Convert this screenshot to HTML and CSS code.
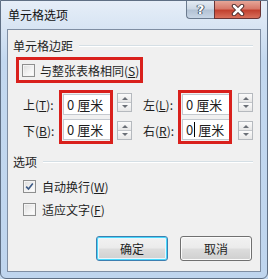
FILE: index.html
```html
<!DOCTYPE html>
<html>
<head>
  <link rel="stylesheet" href="styles.css">
</head>
<body>
  <div class="window">
    <div class="titlebar">
      <span class="title">单元格选项</span>
      <div class="caption-buttons">
        <div class="cap-btn help">?</div>
        <div class="cap-btn close">
          <svg width="14" height="12" viewBox="0 0 14 12">
            <path d="M3 2L11 10M11 2L3 10" stroke="#4a2a2a" stroke-width="4.5" stroke-linecap="round"/>
            <path d="M3 2L11 10M11 2L3 10" stroke="#ffffff" stroke-width="2.5" stroke-linecap="round"/>
          </svg>
        </div>
      </div>
    </div>

    <div class="client">
      <div class="group-title">单元格边距</div>

      <div class="same-box">
        <span class="check"></span>
        <span class="same-text">与整张表格相同(<u>S</u>)</span>
      </div>

      <div class="margins">
        <div class="side left-side">
          <div class="labels">
            <span>上(<u>T</u>):</span>
            <span>下(<u>B</u>):</span>
          </div>
          <div class="red-box">
            <div class="field">0 厘米</div>
            <div class="field">0 厘米</div>
          </div>
          <div class="spins">
            <div class="spin"><span class="up"></span><span class="down"></span></div>
            <div class="spin"><span class="up"></span><span class="down"></span></div>
          </div>
        </div>
        <div class="side right-side">
          <div class="labels">
            <span>左(<u>L</u>):</span>
            <span>右(<u>R</u>):</span>
          </div>
          <div class="red-box">
            <div class="field">0 厘米</div>
            <div class="field">0<span class="caret"></span>厘米</div>
          </div>
          <div class="spins">
            <div class="spin"><span class="up"></span><span class="down"></span></div>
            <div class="spin"><span class="up"></span><span class="down"></span></div>
          </div>
        </div>
      </div>

      <div class="group-title options-title">选项</div>

      <div class="opt first">
        <span class="check checked">
          <svg width="9" height="9" viewBox="0 0 9 9">
            <path d="M1.2 4.6L3.5 7L7.8 1.4" stroke="#3c5a86" stroke-width="1.6" fill="none"/>
          </svg>
        </span>
        <span>自动换行(<u>W</u>)</span>
      </div>
      <div class="opt">
        <span class="check"></span>
        <span>适应文字(<u>F</u>)</span>
      </div>

      <div class="buttons">
        <button class="btn default">确定</button>
        <button class="btn">取消</button>
      </div>
    </div>
  </div>
</body>
</html>
```

FILE: styles.css
```css
body {
  margin: 0;
  font-family: "Noto Sans CJK SC", "Microsoft YaHei", sans-serif;
  font-size: 12px;
  color: #1e1e1e;
  background: #c6daf0;
}

.window {
  width: 268px;
  height: 279px;
  box-sizing: border-box;
  border: 1px solid #5f6f84;
  border-radius: 0 0 6px 6px;
  background: linear-gradient(180deg, #e6eef8 0px, #d7e4f3 28px, #c3d8ef 60px, #bfd5ee 100%);
  display: flex;
  flex-direction: column;
  padding: 0 6px 6px 6px;
}

.titlebar {
  height: 28px;
  display: flex;
  justify-content: space-between;
  align-items: flex-start;
}

.title {
  margin-top: 6px;
  margin-left: 1px;
  line-height: 16px;
  color: #111;
}

.caption-buttons {
  display: flex;
}

.cap-btn {
  height: 18px;
  box-sizing: border-box;
  border: 1px solid #6b7a8e;
  border-top: none;
  display: flex;
  align-items: center;
  justify-content: center;
}

.help {
  width: 28px;
  border-right: none;
  border-radius: 0 0 0 4px;
  background: linear-gradient(180deg, #e4ebf3 0%, #cdd8e5 45%, #b3c2d4 55%, #c8d6e6 100%);
  color: #fff;
  font-family: "DejaVu Sans", sans-serif;
  font-weight: bold;
  font-size: 13px;
  text-shadow: 0 0 1px #38485c, 0 0 1px #38485c, 1px 0 0 #4a5a6e, -1px 0 0 #4a5a6e;
}

.close {
  width: 47px;
  border-color: #6a3434;
  border-radius: 0 0 4px 0;
  background: linear-gradient(180deg, #e6a698 0%, #d7796a 45%, #c2412f 55%, #d8705c 100%);
}

.client {
  flex: 1;
  border: 1px solid #7f8ea3;
  background: #f0f0f0;
  display: flex;
  flex-direction: column;
}

.group-title {
  margin: 9px 7px 0 5px;
  height: 14px;
  line-height: 14px;
  display: flex;
  align-items: center;
  gap: 6px;
}

.group-title::after {
  content: "";
  flex: 1;
  height: 1px;
  background: #d5dfe5;
  border-bottom: 1px solid #ffffff;
}

.same-box {
  margin: 4px 0 0 8px;
  width: 127px;
  height: 26px;
  box-sizing: border-box;
  border: 3px solid #d9201c;
  display: flex;
  align-items: center;
  padding-left: 3px;
  gap: 5px;
}

.same-text {
  white-space: nowrap;
}

.check {
  width: 13px;
  height: 13px;
  flex-shrink: 0;
  box-sizing: border-box;
  border: 1px solid #8e8f8f;
  background: linear-gradient(135deg, #dcdcdc 0%, #f4f4f4 60%, #ffffff 100%);
  box-shadow: inset 0 0 0 1px #f4f4f4;
  display: flex;
  align-items: center;
  justify-content: center;
}

.margins {
  margin-top: 7px;
  display: flex;
}

.side {
  display: flex;
  align-items: stretch;
}

.left-side {
  margin-left: 15px;
}

.right-side {
  margin-left: 11px;
}

.labels {
  width: 36px;
  display: flex;
  flex-direction: column;
  justify-content: space-around;
  padding-top: 1px;
}

.right-side .labels {
  width: 35px;
}

.red-box {
  width: 54px;
  height: 54px;
  box-sizing: border-box;
  border: 3px solid #d9201c;
  display: flex;
  flex-direction: column;
  justify-content: space-between;
  padding: 1px 0 1px 1px;
}

.field {
  height: 21px;
  box-sizing: border-box;
  border: 1px solid #c5c9cf;
  border-right: none;
  background: #fff;
  padding-left: 3px;
  line-height: 19px;
  font-size: 13px;
  display: flex;
  align-items: center;
  gap: 3px;
}

.caret {
  width: 1px;
  height: 15px;
  background: #000;
  margin-left: -2px;
}

.spins {
  display: flex;
  flex-direction: column;
  justify-content: space-between;
  padding: 3px 0 4px 4px;
}

.right-side .spins {
  padding-left: 6px;
}

.spin {
  width: 15px;
  height: 19px;
  box-sizing: border-box;
  border: 1px solid #b5b9be;
  display: flex;
  flex-direction: column;
}

.spin span {
  flex: 1;
  position: relative;
  background: linear-gradient(180deg, #fbfbfb, #e6e6e6);
}

.spin .up {
  border-bottom: 1px solid #c3c6ca;
}

.spin span::before {
  content: "";
  position: absolute;
  left: 4px;
  top: 3px;
  border-left: 3px solid transparent;
  border-right: 3px solid transparent;
}

.spin .up::before {
  border-bottom: 3px solid #6a6f76;
}

.spin .down::before {
  top: 2px;
  border-top: 3px solid #6a6f76;
}

.options-title {
  margin-top: 11px;
}

.opt {
  margin: 7px 0 0 15px;
  height: 20px;
  display: flex;
  align-items: center;
  gap: 6px;
}

.opt + .opt {
  margin-top: 3px;
}

.buttons {
  margin-top: 17px;
  display: flex;
  justify-content: flex-end;
  gap: 12px;
  padding-right: 8px;
}

.btn {
  width: 72px;
  height: 25px;
  font-family: inherit;
  font-size: 12px;
  color: #1e1e1e;
  border: 1px solid #707070;
  border-radius: 3px;
  background: linear-gradient(180deg, #f2f2f2 0%, #ebebeb 48%, #dddddd 52%, #cfcfcf 100%);
  box-shadow: inset 0 0 0 1px #fbfbfb;
  padding: 0;
}

.btn.default {
  border-color: #3c7fb1;
  box-shadow: inset 0 0 0 1px #48d8fb, inset 0 0 0 2px #eaf6fd;
}
```
